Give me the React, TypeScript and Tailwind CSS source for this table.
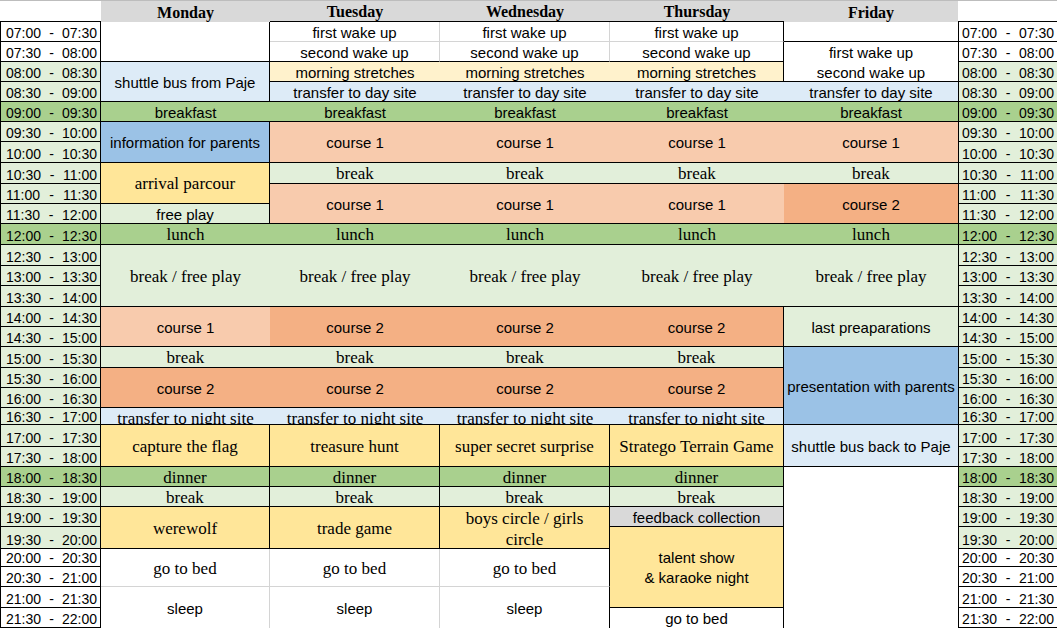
import React from "react";

const SANS = "font-['Liberation_Sans',Arial,sans-serif] text-[15px]";
const SERIF = "font-['Liberation_Serif','Times_New_Roman',serif] text-[17px]";

const BK = "border-b border-b-black";
const BG = "border-b border-b-[#d4d4d4]";
const RK = "border-r border-r-black";
const RG = "border-r border-r-[#d4d4d4]";

const GR = "bg-[#a9d08e]";
const LG = "bg-[#e2efda]";
const LB = "bg-[#ddebf7]";
const BL = "bg-[#9bc2e6]";
const PE = "bg-[#f8cbad]";
const OR = "bg-[#f4b084]";
const YE = "bg-[#ffe699]";
const CR = "bg-[#fff2cc]";
const GY = "bg-[#d9d9d9]";
const WH = "bg-white";

type Cell = {
  p: string;
  bg: string;
  b?: string;
  t?: React.ReactNode;
  f?: "s" | "r";
  x?: string;
};

const SHIFT = "translate-y-[2px]";

const cells: Cell[] = [
  // Monday
  { p: "col-start-2 row-start-2 row-span-2", bg: WH, b: `${BK} ${RK}` },
  { p: "col-start-2 row-start-4 row-span-2", bg: LB, b: `${BK} ${RK}`, t: "shuttle bus from Paje", f: "s" },
  { p: "col-start-2 row-start-6", bg: GR, b: BK, t: "breakfast", f: "s" },
  { p: "col-start-2 row-start-7 row-span-2", bg: BL, b: `${BK} ${RK}`, t: "information for parents", f: "s" },
  { p: "col-start-2 row-start-9 row-span-2", bg: YE, b: `${BK} ${RK}`, t: "arrival parcour", f: "r" },
  { p: "col-start-2 row-start-11", bg: LG, b: `${BK} ${RK}`, t: "free play", f: "s" },
  { p: "col-start-2 row-start-12", bg: GR, b: BK, t: "lunch", f: "r" },
  { p: "col-start-2 row-start-13 row-span-3", bg: LG, b: BK, t: "break / free play", f: "r" },
  { p: "col-start-2 row-start-16 row-span-2", bg: PE, b: BK, t: "course 1", f: "s" },
  { p: "col-start-2 row-start-18", bg: LG, b: BK, t: "break", f: "r" },
  { p: "col-start-2 row-start-19 row-span-2", bg: OR, b: BK, t: "course 2", f: "s" },
  { p: "col-start-2 row-start-21", bg: LB, b: BK, t: "transfer to night site", f: "r", x: SHIFT },
  { p: "col-start-2 row-start-22 row-span-2", bg: YE, b: `${BK} ${RK}`, t: "capture the flag", f: "r" },
  { p: "col-start-2 row-start-24", bg: GR, b: `${BK} ${RK}`, t: "dinner", f: "r" },
  { p: "col-start-2 row-start-25", bg: LG, b: `${BK} ${RK}`, t: "break", f: "r" },
  { p: "col-start-2 row-start-26 row-span-2", bg: YE, b: `${BK} ${RK}`, t: "werewolf", f: "r" },
  { p: "col-start-2 row-start-28 row-span-2", bg: WH, b: `${BG} ${RG}`, t: "go to bed", f: "r" },
  { p: "col-start-2 row-start-30 row-span-2", bg: WH, b: RG, t: "sleep", f: "s" },

  // Tuesday
  { p: "col-start-3 row-start-2", bg: WH, b: `${BG} ${RG}`, t: "first wake up", f: "s" },
  { p: "col-start-3 row-start-3", bg: WH, b: `${BK} ${RG}`, t: "second wake up", f: "s" },
  { p: "col-start-3 row-start-4", bg: CR, b: BK, t: "morning stretches", f: "s" },
  { p: "col-start-3 row-start-5", bg: LB, b: BK, t: "transfer to day site", f: "s" },
  { p: "col-start-3 row-start-6", bg: GR, b: BK, t: "breakfast", f: "s" },
  { p: "col-start-3 row-start-7 row-span-2", bg: PE, b: BK, t: "course 1", f: "s" },
  { p: "col-start-3 row-start-9", bg: LG, b: BK, t: "break", f: "r" },
  { p: "col-start-3 row-start-10 row-span-2", bg: PE, b: BK, t: "course 1", f: "s" },
  { p: "col-start-3 row-start-12", bg: GR, b: BK, t: "lunch", f: "r" },
  { p: "col-start-3 row-start-13 row-span-3", bg: LG, b: BK, t: "break / free play", f: "r" },
  { p: "col-start-3 row-start-16 row-span-2", bg: OR, b: BK, t: "course 2", f: "s" },
  { p: "col-start-3 row-start-18", bg: LG, b: BK, t: "break", f: "r" },
  { p: "col-start-3 row-start-19 row-span-2", bg: OR, b: BK, t: "course 2", f: "s" },
  { p: "col-start-3 row-start-21", bg: LB, b: BK, t: "transfer to night site", f: "r", x: SHIFT },
  { p: "col-start-3 row-start-22 row-span-2", bg: YE, b: `${BK} ${RK}`, t: "treasure hunt", f: "r" },
  { p: "col-start-3 row-start-24", bg: GR, b: `${BK} ${RK}`, t: "dinner", f: "r" },
  { p: "col-start-3 row-start-25", bg: LG, b: `${BK} ${RK}`, t: "break", f: "r" },
  { p: "col-start-3 row-start-26 row-span-2", bg: YE, b: `${BK} ${RK}`, t: "trade game", f: "r" },
  { p: "col-start-3 row-start-28 row-span-2", bg: WH, b: `${BG} ${RG}`, t: "go to bed", f: "r" },
  { p: "col-start-3 row-start-30 row-span-2", bg: WH, b: RG, t: "sleep", f: "s" },

  // Wednesday
  { p: "col-start-4 row-start-2", bg: WH, b: `${BG} ${RG}`, t: "first wake up", f: "s" },
  { p: "col-start-4 row-start-3", bg: WH, b: `${BK} ${RG}`, t: "second wake up", f: "s" },
  { p: "col-start-4 row-start-4", bg: CR, b: BK, t: "morning stretches", f: "s" },
  { p: "col-start-4 row-start-5", bg: LB, b: BK, t: "transfer to day site", f: "s" },
  { p: "col-start-4 row-start-6", bg: GR, b: BK, t: "breakfast", f: "s" },
  { p: "col-start-4 row-start-7 row-span-2", bg: PE, b: BK, t: "course 1", f: "s" },
  { p: "col-start-4 row-start-9", bg: LG, b: BK, t: "break", f: "r" },
  { p: "col-start-4 row-start-10 row-span-2", bg: PE, b: BK, t: "course 1", f: "s" },
  { p: "col-start-4 row-start-12", bg: GR, b: BK, t: "lunch", f: "r" },
  { p: "col-start-4 row-start-13 row-span-3", bg: LG, b: BK, t: "break / free play", f: "r" },
  { p: "col-start-4 row-start-16 row-span-2", bg: OR, b: BK, t: "course 2", f: "s" },
  { p: "col-start-4 row-start-18", bg: LG, b: BK, t: "break", f: "r" },
  { p: "col-start-4 row-start-19 row-span-2", bg: OR, b: BK, t: "course 2", f: "s" },
  { p: "col-start-4 row-start-21", bg: LB, b: BK, t: "transfer to night site", f: "r", x: SHIFT },
  { p: "col-start-4 row-start-22 row-span-2", bg: YE, b: `${BK} ${RK}`, t: "super secret surprise", f: "r" },
  { p: "col-start-4 row-start-24", bg: GR, b: `${BK} ${RK}`, t: "dinner", f: "r" },
  { p: "col-start-4 row-start-25", bg: LG, b: `${BK} ${RK}`, t: "break", f: "r" },
  {
    p: "col-start-4 row-start-26 row-span-2",
    bg: YE,
    b: `${BK} ${RK}`,
    t: (
      <>
        boys circle / girls
        <br />
        circle
      </>
    ),
    f: "r",
    x: "leading-[21px]",
  },
  { p: "col-start-4 row-start-28 row-span-2", bg: WH, b: `${BG} ${RK}`, t: "go to bed", f: "r" },
  { p: "col-start-4 row-start-30 row-span-2", bg: WH, b: RK, t: "sleep", f: "s" },

  // Thursday
  { p: "col-start-5 row-start-2", bg: WH, b: `${BG} ${RK}`, t: "first wake up", f: "s" },
  { p: "col-start-5 row-start-3", bg: WH, b: `${BK} ${RK}`, t: "second wake up", f: "s" },
  { p: "col-start-5 row-start-4", bg: CR, b: `${BK} ${RK}`, t: "morning stretches", f: "s" },
  { p: "col-start-5 row-start-5", bg: LB, b: BK, t: "transfer to day site", f: "s" },
  { p: "col-start-5 row-start-6", bg: GR, b: BK, t: "breakfast", f: "s" },
  { p: "col-start-5 row-start-7 row-span-2", bg: PE, b: BK, t: "course 1", f: "s" },
  { p: "col-start-5 row-start-9", bg: LG, b: BK, t: "break", f: "r" },
  { p: "col-start-5 row-start-10 row-span-2", bg: PE, b: BK, t: "course 1", f: "s" },
  { p: "col-start-5 row-start-12", bg: GR, b: BK, t: "lunch", f: "r" },
  { p: "col-start-5 row-start-13 row-span-3", bg: LG, b: BK, t: "break / free play", f: "r" },
  { p: "col-start-5 row-start-16 row-span-2", bg: OR, b: `${BK} ${RK}`, t: "course 2", f: "s" },
  { p: "col-start-5 row-start-18", bg: LG, b: `${BK} ${RK}`, t: "break", f: "r" },
  { p: "col-start-5 row-start-19 row-span-2", bg: OR, b: `${BK} ${RK}`, t: "course 2", f: "s" },
  { p: "col-start-5 row-start-21", bg: LB, b: `${BK} ${RK}`, t: "transfer to night site", f: "r", x: SHIFT },
  { p: "col-start-5 row-start-22 row-span-2", bg: YE, b: `${BK} ${RK}`, t: "Stratego Terrain Game", f: "r" },
  { p: "col-start-5 row-start-24", bg: GR, b: `${BK} ${RK}`, t: "dinner", f: "r" },
  { p: "col-start-5 row-start-25", bg: LG, b: `${BK} ${RK}`, t: "break", f: "r" },
  { p: "col-start-5 row-start-26", bg: GY, b: `${BK} ${RK}`, t: "feedback collection", f: "s" },
  {
    p: "col-start-5 row-start-27 row-span-4",
    bg: YE,
    b: `${BK} ${RK}`,
    t: (
      <>
        talent show
        <br />& karaoke night
      </>
    ),
    f: "s",
  },
  { p: "col-start-5 row-start-31", bg: WH, b: RK, t: "go to bed", f: "s" },

  // Friday
  { p: "col-start-6 row-start-2", bg: WH, b: BK },
  { p: "col-start-6 row-start-3", bg: WH, t: "first wake up", f: "s" },
  { p: "col-start-6 row-start-4", bg: WH, b: BK, t: "second wake up", f: "s" },
  { p: "col-start-6 row-start-5", bg: LB, b: BK, t: "transfer to day site", f: "s" },
  { p: "col-start-6 row-start-6", bg: GR, b: BK, t: "breakfast", f: "s" },
  { p: "col-start-6 row-start-7 row-span-2", bg: PE, b: BK, t: "course 1", f: "s" },
  { p: "col-start-6 row-start-9", bg: LG, b: BK, t: "break", f: "r" },
  { p: "col-start-6 row-start-10 row-span-2", bg: OR, b: BK, t: "course 2", f: "s" },
  { p: "col-start-6 row-start-12", bg: GR, b: BK, t: "lunch", f: "r" },
  { p: "col-start-6 row-start-13 row-span-3", bg: LG, b: BK, t: "break / free play", f: "r" },
  { p: "col-start-6 row-start-16 row-span-2", bg: LG, b: BK, t: "last preaparations", f: "s" },
  { p: "col-start-6 row-start-18 row-span-4", bg: BL, b: BK, t: "presentation with parents", f: "s" },
  { p: "col-start-6 row-start-22 row-span-2", bg: LB, b: BK, t: "shuttle bus back to Paje", f: "s" },
  { p: "col-start-6 row-start-24 row-span-8", bg: WH },
];

type TimeRow = { a: string; z: string; row: string; bg: string; x?: string };

const times: TimeRow[] = [
  { a: "07:00", z: "07:30", row: "row-start-2", bg: WH },
  { a: "07:30", z: "08:00", row: "row-start-3", bg: WH },
  { a: "08:00", z: "08:30", row: "row-start-4", bg: LG },
  { a: "08:30", z: "09:00", row: "row-start-5", bg: LG },
  { a: "09:00", z: "09:30", row: "row-start-6", bg: GR },
  { a: "09:30", z: "10:00", row: "row-start-7", bg: LG },
  { a: "10:00", z: "10:30", row: "row-start-8", bg: LG },
  { a: "10:30", z: "11:00", row: "row-start-9", bg: LG },
  { a: "11:00", z: "11:30", row: "row-start-10", bg: LG },
  { a: "11:30", z: "12:00", row: "row-start-11", bg: LG },
  { a: "12:00", z: "12:30", row: "row-start-12", bg: GR },
  { a: "12:30", z: "13:00", row: "row-start-13", bg: LG },
  { a: "13:00", z: "13:30", row: "row-start-14", bg: LG },
  { a: "13:30", z: "14:00", row: "row-start-15", bg: LG },
  { a: "14:00", z: "14:30", row: "row-start-16", bg: LG },
  { a: "14:30", z: "15:00", row: "row-start-17", bg: LG },
  { a: "15:00", z: "15:30", row: "row-start-18", bg: LG },
  { a: "15:30", z: "16:00", row: "row-start-19", bg: LG },
  { a: "16:00", z: "16:30", row: "row-start-20", bg: LG },
  { a: "16:30", z: "17:00", row: "row-start-21", bg: LG, x: "translate-y-[1px]" },
  { a: "17:00", z: "17:30", row: "row-start-22", bg: LG },
  { a: "17:30", z: "18:00", row: "row-start-23", bg: LG },
  { a: "18:00", z: "18:30", row: "row-start-24", bg: GR },
  { a: "18:30", z: "19:00", row: "row-start-25", bg: LG },
  { a: "19:00", z: "19:30", row: "row-start-26", bg: LG },
  { a: "19:30", z: "20:00", row: "row-start-27", bg: LG },
  { a: "20:00", z: "20:30", row: "row-start-28", bg: WH },
  { a: "20:30", z: "21:00", row: "row-start-29", bg: WH },
  { a: "21:00", z: "21:30", row: "row-start-30", bg: WH },
  { a: "21:30", z: "22:00", row: "row-start-31", bg: WH },
];

const days = [
  { d: "Monday", p: "col-start-2", b: "" },
  { d: "Tuesday", p: "col-start-3", b: BK },
  { d: "Wednesday", p: "col-start-4", b: BK },
  { d: "Thursday", p: "col-start-5", b: BK },
  { d: "Friday", p: "col-start-6", b: "" },
];

function TimeCell({ t, side }: { t: TimeRow; side: "l" | "r" }) {
  const sideCls =
    side === "l"
      ? "col-start-1 border-l border-l-black border-r border-r-black pl-[5px] pr-[3px]"
      : "col-start-7 border-l border-l-black pl-[3px] pr-[5px]";
  return (
    <div
      className={`${t.row} ${sideCls} ${t.bg} ${BK} flex items-end justify-between overflow-hidden font-['Liberation_Sans',Arial,sans-serif] text-[14px] leading-[16px] text-black`}
    >
      <div className={`flex w-full justify-between ${t.x ?? ""}`}>
        <span>{t.a}</span>
        <span>-</span>
        <span>{t.z}</span>
      </div>
    </div>
  );
}

export default function App() {
  return (
    <div className="w-[1057px] h-[628px] overflow-hidden bg-white">
      <div className="grid grid-cols-[101px_169px_170px_170px_174px_174px_101px] grid-rows-[22px_20px_20px_20px_20px_20px_20px_21px_21px_20px_20px_21px_21px_20px_21px_20px_20px_21px_20px_20px_17px_22px_20px_20px_20px_20px_22px_18px_20px_21px_20px]">
        <div className={`col-start-1 row-start-1 bg-white border-t border-t-[#bdbdbd] ${BK}`} />
        {days.map((d) => (
          <div
            key={d.d}
            className={`${d.p} row-start-1 ${GY} border-t border-t-[#bdbdbd] ${d.b} flex items-center justify-center pt-[2px] font-['Liberation_Serif','Times_New_Roman',serif] text-[16px] font-bold leading-[20px] text-black`}
          >
            {d.d}
          </div>
        ))}
        <div className={`col-start-7 row-start-1 bg-white border-t border-t-[#bdbdbd] ${BK}`} />

        {times.map((t) => (
          <TimeCell key={"l" + t.a} t={t} side="l" />
        ))}
        {times.map((t) => (
          <TimeCell key={"r" + t.a} t={t} side="r" />
        ))}

        {cells.map((c, i) => (
          <div
            key={i}
            className={`${c.p} ${c.bg} ${c.b ?? ""} flex items-center justify-center overflow-hidden pt-[2px] text-center text-black ${
              c.f === "r" ? SERIF : SANS
            }`}
          >
            {c.t ? <div className={`leading-[20px] whitespace-nowrap ${c.x ?? ""}`}>{c.t}</div> : null}
          </div>
        ))}
      </div>
    </div>
  );
}
